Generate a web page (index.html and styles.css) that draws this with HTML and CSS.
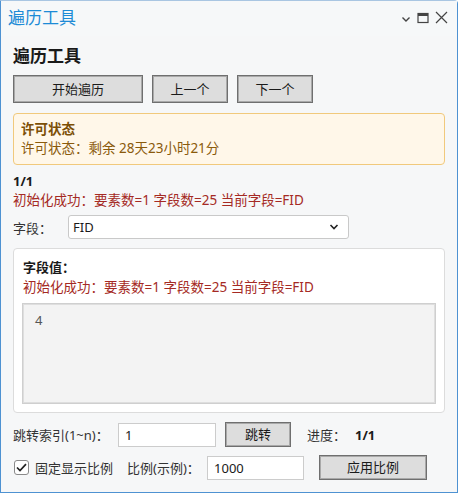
FILE: index.html
```html
<!DOCTYPE html>
<html lang="zh-CN">
<head>
<meta charset="utf-8">
<link rel="stylesheet" href="styles.css">
</head>
<body>
<div class="window">
  <div class="titlebar">
    <span class="title">遍历工具</span>
    <div class="win-ctrls">
      <svg class="ic-chev" width="10" height="8" viewBox="0 0 10 8"><path d="M1.5 2.5 L5 6 L8.5 2.5" fill="none" stroke="#444" stroke-width="1.4"/></svg>
      <svg class="ic-max" width="12" height="12" viewBox="0 0 12 12"><rect x="1" y="1.5" width="10" height="9" fill="none" stroke="#444" stroke-width="1.2"/><rect x="1" y="1.5" width="10" height="2.5" fill="#444"/></svg>
      <svg class="ic-close" width="13" height="13" viewBox="0 0 13 13"><path d="M1 1 L12 12 M12 1 L1 12" stroke="#444" stroke-width="1.2"/></svg>
    </div>
  </div>
  <div class="content">
    <h1 class="heading">遍历工具</h1>
    <div class="btn-row">
      <button class="btn btn-start">开始遍历</button>
      <button class="btn btn-nav">上一个</button>
      <button class="btn btn-nav">下一个</button>
    </div>
    <div class="license">
      <div class="license-title">许可状态</div>
      <div class="license-text">许可状态：剩余 28天23小时21分</div>
    </div>
    <div class="progress">1/1</div>
    <div class="status">初始化成功：要素数=1 字段数=25 当前字段=FID</div>
    <div class="field-row">
      <span class="label field-label">字段：</span>
      <div class="select">
        <span>FID</span>
        <svg width="10" height="8" viewBox="0 0 10 8"><path d="M1.5 2 L5 5.5 L8.5 2" fill="none" stroke="#222" stroke-width="1.6"/></svg>
      </div>
    </div>
    <div class="card">
      <div class="card-title">字段值：</div>
      <div class="status card-status">初始化成功：要素数=1 字段数=25 当前字段=FID</div>
      <div class="value-box">4</div>
    </div>
    <div class="jump-row">
      <span class="label jump-label">跳转索引(1~n)：</span>
      <div class="input input-jump">1</div>
      <button class="btn btn-jump">跳转</button>
      <span class="label prog-label">进度：</span>
      <span class="prog-val">1/1</span>
    </div>
    <div class="scale-row">
      <span class="checkbox"><svg width="11" height="9" viewBox="0 0 11 9"><path d="M1 4.5 L4 7.5 L10 1.2" fill="none" stroke="#222" stroke-width="1.7"/></svg></span>
      <span class="label fixed-label">固定显示比例</span>
      <span class="label scale-label">比例(示例)：</span>
      <div class="input input-scale">1000</div>
      <button class="btn btn-apply">应用比例</button>
    </div>
  </div>
</div>
</body>
</html>
```

FILE: styles.css
```css
* { box-sizing: border-box; }
html, body { margin: 0; padding: 0; background: #ffffff; }
body {
  font-family: "Noto Sans", "Noto Sans CJK SC", sans-serif;
  font-size: 13px;
  color: #222;
}
.window {
  width: 458px;
  height: 493px;
  background: #f6f7f8;
  border: 1px solid #4e92d2;
  border-top-color: #a9c6e2;
  border-radius: 0 4px 0 0;
}
.titlebar {
  height: 35px;
  display: flex;
  align-items: center;
  justify-content: space-between;
  padding: 0 9px 0 7px;
  background: #f6f8f9;
}
.title {
  color: #1d8bd6;
  font-size: 17px;
  line-height: 20px;
  margin-top: -1px;
}
.win-ctrls {
  display: flex;
  align-items: center;
  gap: 6px;
  margin-top: -2px;
}
.ic-chev { margin-top: 2px; }
.content { padding: 0 12px; }
.heading {
  margin: 9px 0 0;
  font-size: 17px;
  font-weight: 700;
  line-height: 22px;
  color: #1a1a1a;
}
.btn-row {
  display: flex;
  gap: 9px;
  margin-top: 8px;
}
.btn {
  font-family: inherit;
  font-size: 13px;
  color: #1a1a1a;
  background: #dddddd;
  border: 1px solid #6f6f6f;
  box-shadow: inset 0 0 0 1px #a9a9a9;
  height: 28px;
  padding: 0;
  line-height: 24px;
}
.btn-start { width: 130px; }
.btn-nav { width: 76px; }
.license {
  margin-top: 10px;
  height: 52px;
  background: #fff7e9;
  border: 1px solid #f1c97c;
  border-radius: 4px;
  padding: 6px 7px 5px;
  color: #8a5a0c;
  line-height: 19px;
  font-size: 13.5px;
}
.license-title { font-weight: 700; color: #7c4f06; }
.progress {
  margin-top: 7px;
  font-weight: 700;
  line-height: 19px;
  color: #1a1a1a;
}
.status {
  color: #a52a24;
  line-height: 19px;
  font-size: 13.5px;
}
.field-row {
  display: flex;
  align-items: center;
  margin-top: 5px;
  height: 24px;
}
.label { color: #333; white-space: nowrap; }
.field-label { width: 55px; }
.select {
  width: 281px;
  height: 24px;
  background: #fff;
  border: 1px solid #c9c9c9;
  border-radius: 3px;
  display: flex;
  align-items: center;
  justify-content: space-between;
  padding: 0 9px 0 4px;
  color: #1a1a1a;
}
.card {
  margin-top: 9px;
  height: 165px;
  background: #fff;
  border: 1px solid #dcdcdc;
  border-radius: 4px;
  padding: 8px 8px 8px;
}
.card-title {
  font-weight: 700;
  line-height: 20px;
  padding-left: 1px;
  color: #1a1a1a;
}
.card-status { line-height: 21px; padding-left: 1px; }
.value-box {
  margin-top: 5px;
  height: 101px;
  background: #f3f3f3;
  border: 1px solid #cfcfcf;
  box-shadow: inset 0 0 0 1px #dedede;
  padding: 7px 12px;
  color: #555;
  line-height: 19px;
}
.jump-row {
  display: flex;
  align-items: center;
  margin-top: 9px;
  height: 25px;
}
.jump-label { width: 105px; }
.input {
  height: 24px;
  background: #fff;
  border: 1px solid #cccccc;
  padding: 0 6px;
  line-height: 22px;
  color: #1a1a1a;
}
.input-jump { width: 98px; }
.btn-jump { width: 66px; height: 25px; margin-left: 9px; line-height: 21px; }
.prog-label { margin-left: 16px; width: 48px; }
.prog-val { font-weight: 700; color: #1a1a1a; }
.scale-row {
  display: flex;
  align-items: center;
  margin-top: 8px;
  height: 25px;
}
.checkbox {
  width: 15px;
  height: 15px;
  border: 1px solid #8a8a8a;
  border-radius: 3px;
  background: #fff;
  display: flex;
  align-items: center;
  justify-content: center;
  margin-left: 1px;
}
.fixed-label { margin-left: 6px; }
.scale-label { margin-left: 14px; width: 80px; }
.input-scale { width: 97px; }
.btn-apply { width: 108px; height: 25px; margin-left: 15px; line-height: 21px; }
```
